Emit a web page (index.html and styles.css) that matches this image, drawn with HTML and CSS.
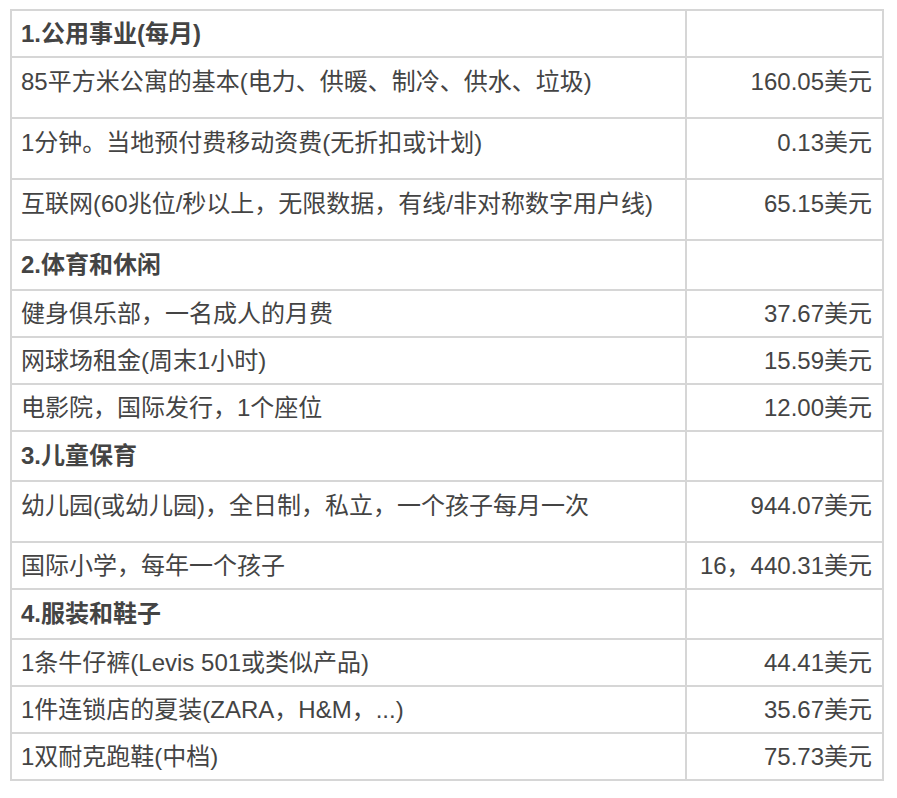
FILE: index.html
```html
<!DOCTYPE html>
<html lang="zh-CN">
<head>
<meta charset="utf-8">
<title>生活费用</title>
<link rel="stylesheet" href="styles.css">
</head>
<body>
<div class="wrap">
<table class="costs">
  <colgroup><col class="c-item"><col class="c-price"></colgroup>
  <tbody>
    <tr class="head first"><td>1.公用事业(每月)</td><td></td></tr>
    <tr class="tall"><td>85平方米公寓的基本(电力、供暖、制冷、供水、垃圾)</td><td class="price">160.05美元</td></tr>
    <tr class="tall"><td>1分钟。当地预付费移动资费(无折扣或计划)</td><td class="price">0.13美元</td></tr>
    <tr class="tall"><td>互联网(60兆位/秒以上，无限数据，有线/非对称数字用户线)</td><td class="price">65.15美元</td></tr>
    <tr class="head"><td>2.体育和休闲</td><td></td></tr>
    <tr><td>健身俱乐部，一名成人的月费</td><td class="price">37.67美元</td></tr>
    <tr><td>网球场租金(周末1小时)</td><td class="price">15.59美元</td></tr>
    <tr><td>电影院，国际发行，1个座位</td><td class="price">12.00美元</td></tr>
    <tr class="head"><td>3.儿童保育</td><td></td></tr>
    <tr class="tall"><td>幼儿园(或幼儿园)，全日制，私立，一个孩子每月一次</td><td class="price">944.07美元</td></tr>
    <tr><td>国际小学，每年一个孩子</td><td class="price">16，440.31美元</td></tr>
    <tr class="head"><td>4.服装和鞋子</td><td></td></tr>
    <tr><td>1条牛仔裤(Levis 501或类似产品)</td><td class="price">44.41美元</td></tr>
    <tr><td>1件连锁店的夏装(ZARA，H&amp;M，...)</td><td class="price">35.67美元</td></tr>
    <tr><td>1双耐克跑鞋(中档)</td><td class="price">75.73美元</td></tr>
  </tbody>
</table>
</div>
</body>
</html>
```

FILE: styles.css
```css
html, body {
  margin: 0;
  padding: 0;
  background: #ffffff;
}
.wrap {
  padding: 9px 13px 0 10px;
}
.costs {
  width: 872px;
  border-collapse: collapse;
  table-layout: fixed;
  font-family: "Liberation Sans", "Noto Sans CJK SC", sans-serif;
  font-size: 24px;
  line-height: 29px;
  color: #444444;
}
.c-item { width: 675px; }
.c-price { width: 197px; }
.costs td {
  border: 2px solid #d6d6d6;
  padding: 8px 9px 8px 9px;
  vertical-align: top;
  white-space: nowrap;
}
.costs td.price {
  text-align: right;
  padding-right: 10px;
}
.costs tr.head td {
  font-weight: bold;
  padding-top: 9px;
  padding-bottom: 10px;
}
.costs tr.head.first td {
  padding-top: 8px;
  padding-bottom: 8px;
}
.costs tr.tall td {
  padding-top: 9px;
  padding-bottom: 21px;
}
```
